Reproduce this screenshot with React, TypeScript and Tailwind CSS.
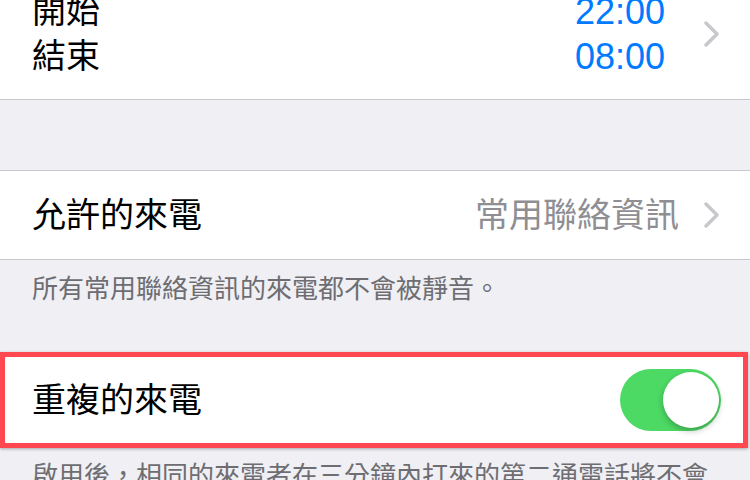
import React from "react";

const FONT = '"Liberation Sans", "Noto Sans CJK TC", sans-serif';

function Chevron() {
  return (
    <svg width="17" height="26" viewBox="0 0 17 26" className="shrink-0">
      <polyline points="3,2 14,13 3,24" fill="none" stroke="#c7c7cc" strokeWidth="3.4" strokeLinecap="round" strokeLinejoin="round" />
    </svg>
  );
}

function Toggle({ on }: { on: boolean }) {
  return (
    <div className={`relative h-[62px] w-[101px] shrink-0 rounded-full ${on ? "bg-[#4cd964]" : "bg-[#e5e5ea]"}`}>
      <span className="absolute right-[2px] top-[3px] h-[56px] w-[56px] rounded-full bg-white shadow-[0_3px_6px_rgba(0,0,0,0.25)]" />
    </div>
  );
}

export default function App() {
  return (
    <div className="flex h-[480px] w-[750px] flex-col overflow-hidden bg-[#efeff4] text-black" style={{ fontFamily: FONT }}>
      {/* Schedule times */}
      <div className="flex h-[100px] shrink-0 flex-col border-b border-[#c8c7cc] bg-white">
        <div className="mt-[-11px] flex items-center pl-[32px] pr-[30px]">
          <div className="flex-1 text-[34px] leading-[45px]">
            <p>開始</p>
            <p>結束</p>
          </div>
          <div className="mr-[38px] text-right text-[36px] leading-[45px] text-[#007aff]">
            <p>22:00</p>
            <p>08:00</p>
          </div>
          <Chevron />
        </div>
      </div>

      {/* Allowed calls */}
      <div className="mt-[70px] flex h-[90px] shrink-0 items-center border-y border-[#c8c7cc] bg-white pl-[32px] pr-[30px]">
        <span className="flex-1 text-[34px]">允許的來電</span>
        <span className="mr-[24px] text-[34px] text-[#8e8e93]">常用聯絡資訊</span>
        <Chevron />
      </div>
      <p className="shrink-0 pl-[32px] pt-[11px] text-[26px] leading-[36px] text-[#6d6d72]">所有常用聯絡資訊的來電都不會被靜音。</p>

      {/* Repeated calls, highlighted */}
      <div className="mt-[45px] mr-[2px] flex h-[96px] shrink-0 items-center border-[5px] border-[#ff4850] bg-white pl-[27px] pr-[22px] shadow-[0_1px_3px_rgba(0,0,0,0.3)]">
        <span className="flex-1 text-[34px]">重複的來電</span>
        <Toggle on />
      </div>
      <p className="shrink-0 pl-[32px] pr-[30px] pt-[10px] text-[26px] leading-[36px] text-[#6d6d72]">
        啟用後，相同的來電者在三分鐘內打來的第二通電話將不會被靜音。
      </p>
    </div>
  );
}
